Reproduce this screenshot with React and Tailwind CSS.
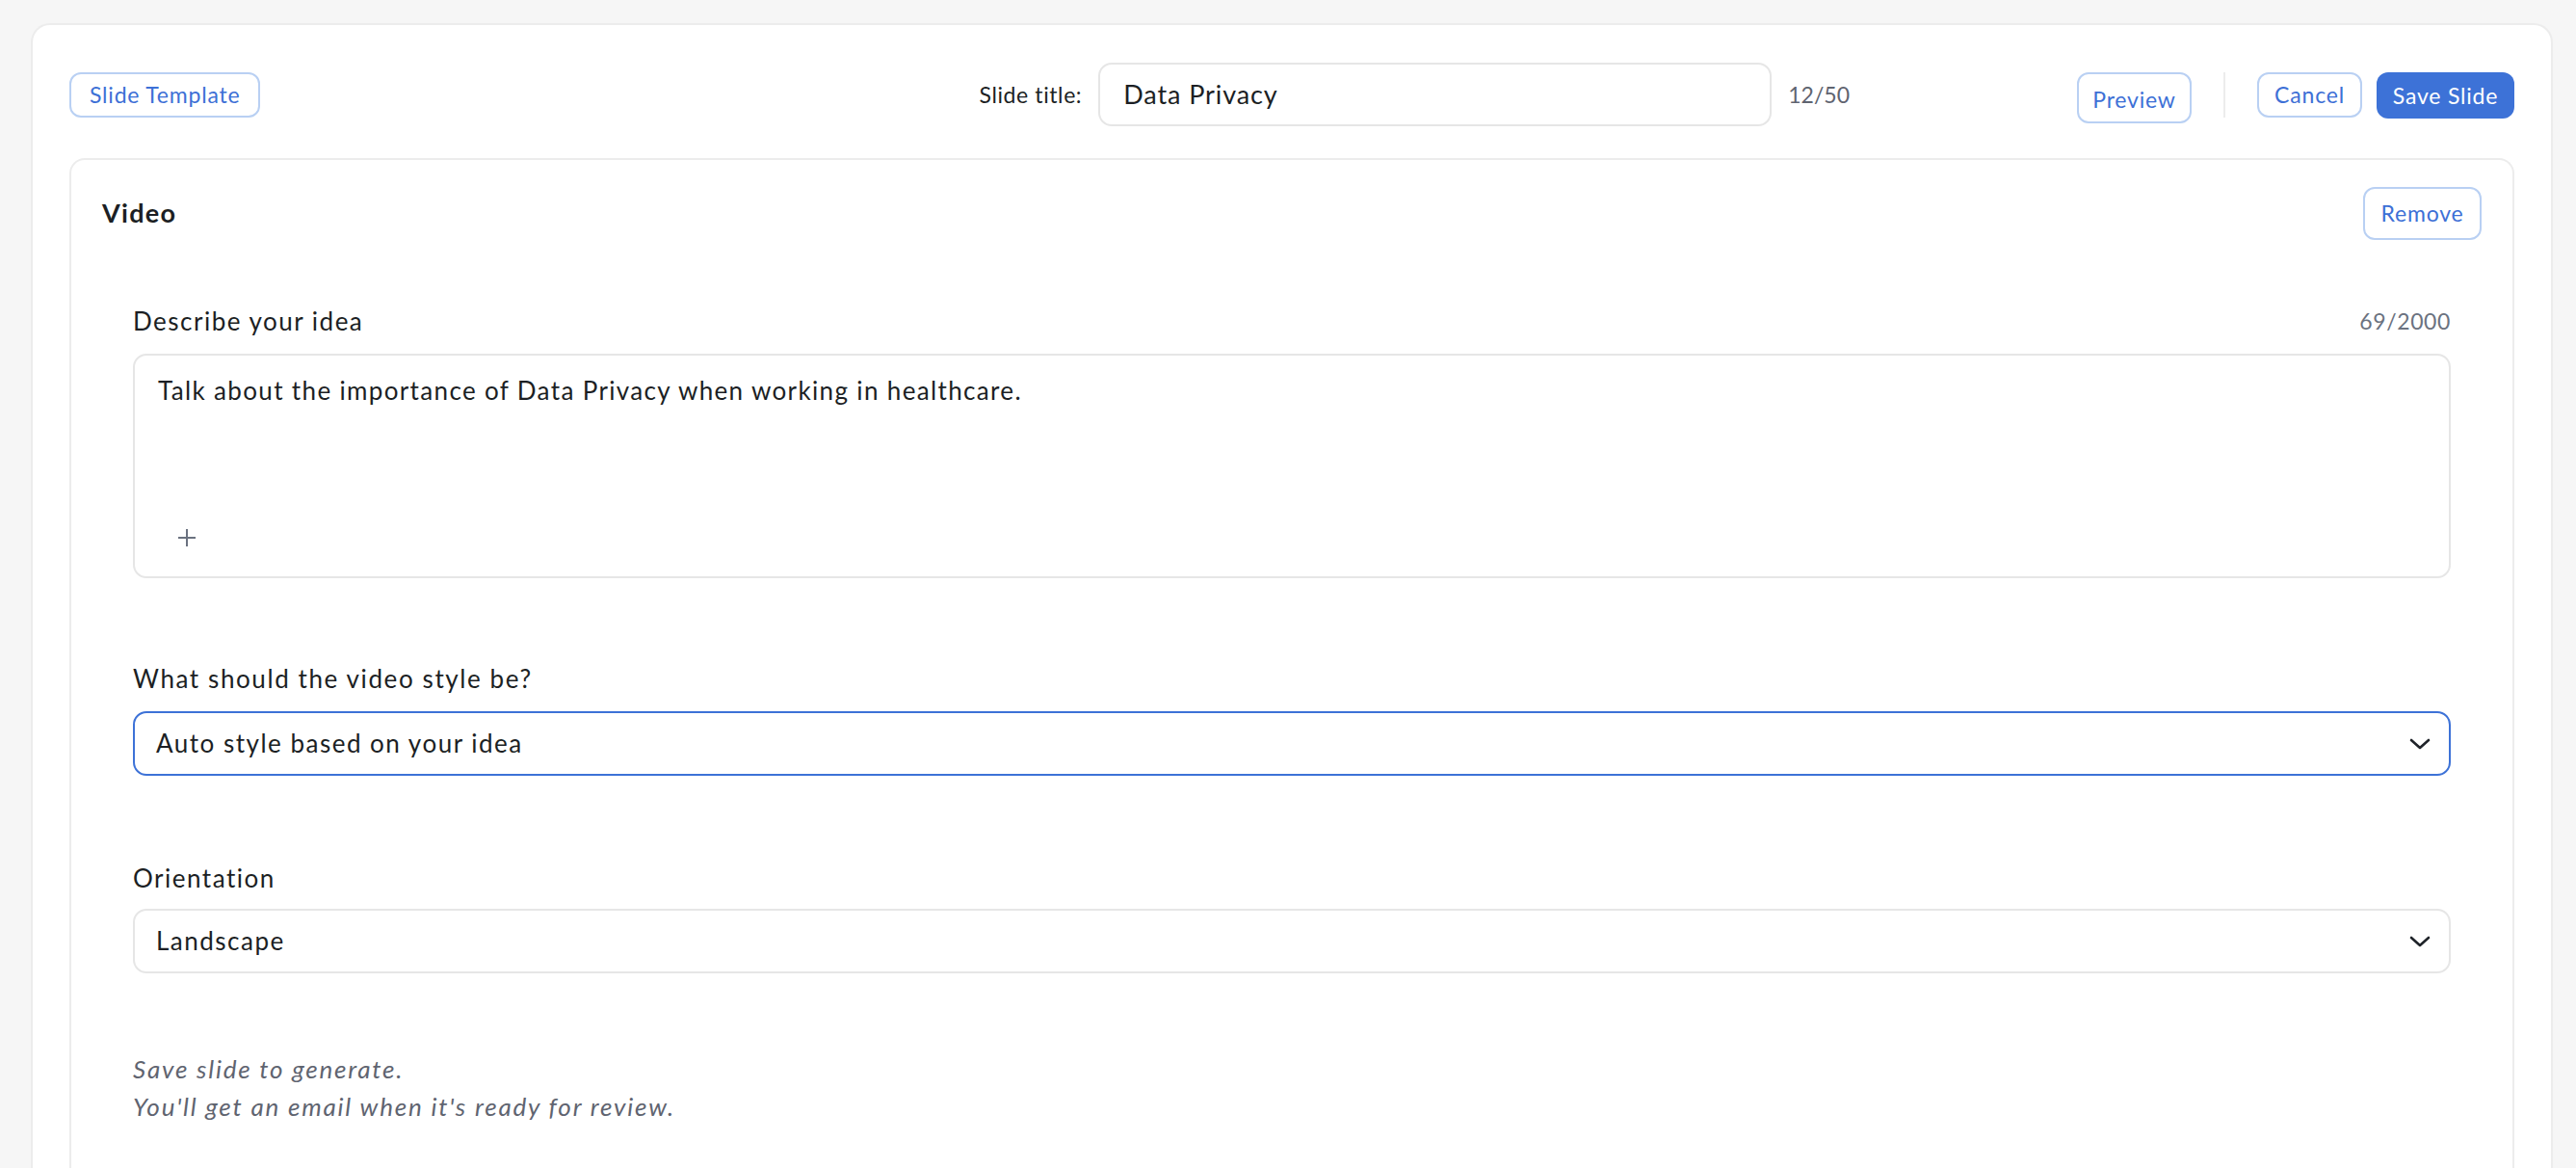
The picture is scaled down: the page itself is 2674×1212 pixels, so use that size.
import { useState } from "react";

function Chevron() {
  return (
    <svg width="24" height="14" viewBox="0 0 24 14" fill="none" className="shrink-0">
      <path
        d="M3 3 L12 11 L21 3"
        stroke="#1f2329"
        strokeWidth="2.6"
        strokeLinecap="round"
        strokeLinejoin="round"
      />
    </svg>
  );
}

function OutlineButton({ children, className = "" }) {
  return (
    <button
      className={`rounded-[12px] border-2 border-[#b9d0f3] bg-white text-[#3d70d6] text-[23px] leading-none tracking-[0.8px] ${className}`}
    >
      {children}
    </button>
  );
}

function SelectBox({ value, focused }) {
  return (
    <div
      className={`flex h-[67px] items-center justify-between rounded-[14px] bg-white pl-[22px] pr-[18px] ${
        focused ? "border-2 border-[#3d72d7]" : "border-2 border-[#e6e6e6]"
      }`}
    >
      <span className="text-[26px] tracking-[1.5px] text-[#1c1f24]">{value}</span>
      <Chevron />
    </div>
  );
}

export default function App() {
  const [title] = useState("Data Privacy");
  const [idea] = useState(
    "Talk about the importance of Data Privacy when working in healthcare."
  );

  return (
    <div
      className="min-h-screen bg-[#f6f6f6] pl-[32px] pr-[24px] pt-[24px]"
      style={{ fontFamily: "Lato, 'Noto Sans', sans-serif" }}
    >
      <div className="rounded-t-[20px] border-2 border-b-0 border-[#ececec] bg-white px-[38px] pt-[39px] pb-[40px]">
        {/* header */}
        <div className="flex items-start">
          <OutlineButton className="mt-[10px] h-[47px] px-[19px]">
            Slide Template
          </OutlineButton>

          <div className="ml-auto mr-[236px] flex items-center gap-[17px]">
            <span className="text-[23px] tracking-[0.6px] text-[#1c1f24]">Slide title:</span>
            <div className="flex h-[66px] w-[699px] items-center rounded-[14px] border-2 border-[#e6e6e6] px-[24px]">
              <span className="text-[27px] tracking-[0.9px] text-[#1c1f24]">{title}</span>
            </div>
            <span className="text-[23px] text-[#5f6470]">
              {title.length}/50
            </span>
          </div>

          <div className="mt-[10px] flex items-start">
            <OutlineButton className="h-[53px] w-[119px] pt-[3px]">
              Preview
            </OutlineButton>
            <div className="mx-[33px] h-[47px] w-[2px] bg-[#ececec]" />
            <OutlineButton className="h-[47px] w-[109px]">Cancel</OutlineButton>
            <button className="ml-[15px] h-[48px] w-[143px] rounded-[12px] bg-[#3d72d7] text-[23px] leading-none tracking-[0.8px] text-white">
              Save Slide
            </button>
          </div>
        </div>

        {/* video block */}
        <div className="mt-[33px] rounded-t-[16px] border-2 border-b-0 border-[#ececec] px-[32px] pt-[28px] pb-[60px]">
          <div className="flex items-center justify-between">
            <h2 className="text-[27px] font-bold tracking-[1.3px] text-[#1c1f24]">Video</h2>
            <OutlineButton className="h-[55px] w-[123px]">Remove</OutlineButton>
          </div>

          <div className="px-[32px]">
            <div className="mt-[66px] flex items-center justify-between">
              <label className="text-[26px] leading-[36px] tracking-[1.5px] text-[#1c1f24]">
                Describe your idea
              </label>
              <span className="text-[23px] tracking-[0.6px] text-[#6b7280]">
                {idea.length}/2000
              </span>
            </div>
            <div className="mt-[16px] flex h-[233px] flex-col justify-between rounded-[14px] border-2 border-[#e6e6e6] px-[24px] pt-[18px] pb-[30px]">
              <p className="text-[26px] leading-[36px] tracking-[1.35px] text-[#1c1f24]">{idea}</p>
              <svg width="20" height="20" viewBox="0 0 20 20" className="ml-[20px]">
                <path d="M10 1 V19 M1 10 H19" stroke="#6b7280" strokeWidth="2" />
              </svg>
            </div>

            <label className="mt-[86px] block text-[26px] leading-[36px] tracking-[1.6px] text-[#1c1f24]">
              What should the video style be?
            </label>
            <div className="mt-[16px]">
              <SelectBox value="Auto style based on your idea" focused />
            </div>

            <label className="mt-[88px] block text-[26px] leading-[36px] tracking-[1.5px] text-[#1c1f24]">
              Orientation
            </label>
            <div className="mt-[14px]">
              <SelectBox value="Landscape" />
            </div>

            <div className="mt-[80px] text-[26px] italic leading-[39px] tracking-[1.8px] text-[#5f6470]">
              <p>Save slide to generate.</p>
              <p>You'll get an email when it's ready for review.</p>
            </div>
          </div>
        </div>
      </div>
    </div>
  );
}
